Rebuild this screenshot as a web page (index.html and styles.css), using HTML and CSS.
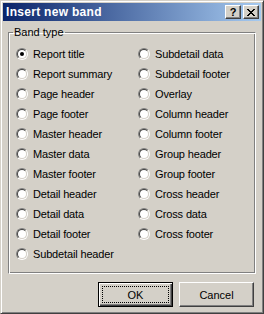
FILE: index.html
```html
<!DOCTYPE html>
<html>
<head>
<meta charset="utf-8">
<link rel="stylesheet" href="styles.css">
</head>
<body>
<div class="window">
  <div class="titlebar">
    <span class="title">Insert new band</span>
    <div class="caption-buttons">
      <button class="cap-btn"><span class="q">?</span></button>
      <button class="cap-btn"><svg width="8" height="7" viewBox="0 0 8 7"><path d="M0 0h2v1h1v1h2v-1h1v-1h2v1h-1v1h-1v1h-1v1h1v1h1v1h1v1h-2v-1h-1v-1h-2v1h-1v1h-2v-1h1v-1h1v-1h1v-1h-1v-1h-1v-1h-1z" fill="#000"/></svg></button>
    </div>
  </div>
  <div class="client">
    <fieldset class="group">
      <legend>Band type</legend>
      <div class="cols">
        <div class="col">
          <label class="radio"><span class="dot checked"></span>Report title</label>
          <label class="radio"><span class="dot"></span>Report summary</label>
          <label class="radio"><span class="dot"></span>Page header</label>
          <label class="radio"><span class="dot"></span>Page footer</label>
          <label class="radio"><span class="dot"></span>Master header</label>
          <label class="radio"><span class="dot"></span>Master data</label>
          <label class="radio"><span class="dot"></span>Master footer</label>
          <label class="radio"><span class="dot"></span>Detail header</label>
          <label class="radio"><span class="dot"></span>Detail data</label>
          <label class="radio"><span class="dot"></span>Detail footer</label>
          <label class="radio"><span class="dot"></span>Subdetail header</label>
        </div>
        <div class="col">
          <label class="radio"><span class="dot"></span>Subdetail data</label>
          <label class="radio"><span class="dot"></span>Subdetail footer</label>
          <label class="radio"><span class="dot"></span>Overlay</label>
          <label class="radio"><span class="dot"></span>Column header</label>
          <label class="radio"><span class="dot"></span>Column footer</label>
          <label class="radio"><span class="dot"></span>Group header</label>
          <label class="radio"><span class="dot"></span>Group footer</label>
          <label class="radio"><span class="dot"></span>Cross header</label>
          <label class="radio"><span class="dot"></span>Cross data</label>
          <label class="radio"><span class="dot"></span>Cross footer</label>
        </div>
      </div>
    </fieldset>
    <div class="buttons">
      <button class="btn default"><span class="focus">OK</span></button>
      <button class="btn">Cancel</button>
    </div>
  </div>
</div>
</body>
</html>
```
FILE: styles.css
```css
* { box-sizing: border-box; }
html, body { margin: 0; padding: 0; background: #d4d0c8; }
body { font-family: "Liberation Sans", Arial, sans-serif; font-size: 11px; color: #000; }

.window {
  width: 264px; height: 314px;
  background: #d4d0c8;
  border: 1px solid; border-color: #d4d0c8 #404040 #404040 #d4d0c8;
  box-shadow: inset 1px 1px 0 #fff, inset -1px -1px 0 #808080;
  padding: 2px;
  display: flex; flex-direction: column;
}
.titlebar {
  height: 18px;
  padding: 0 2px 0 2px;
  background: linear-gradient(90deg, #0a246a 0%, #a6caf0 100%);
  display: flex;
  align-items: center;
}
.title {
  flex: 1;
  color: #fff; font-weight: bold; font-size: 12px; padding-left: 1px; letter-spacing: 0.3px;
}
.caption-buttons { display: flex; gap: 2px; }
.cap-btn {
  width: 16px; height: 14px; padding: 0; margin: 0;
  background: #d4d0c8;
  border: 1px solid; border-color: #fff #404040 #404040 #fff;
  box-shadow: inset -1px -1px 0 #808080;
  display: flex; align-items: center; justify-content: center;
}
.cap-btn .q { font-weight: bold; font-size: 11px; font-family: "Liberation Sans", Arial, sans-serif; line-height: 10px; }

.client {
  flex: 1;
  padding: 5px 5px 0 5px;
  display: flex; flex-direction: column;
}
.group {
  margin: 0; padding: 5px 0 0 0;
  height: 248px;
  border: 1px solid; border-color: #808080 #fff #fff #808080;
  box-shadow: inset 1px 1px 0 #fff, -1px -1px 0 #808080 inset;
}
.group legend { padding: 0 1px; margin-left: 4px; line-height: 13px; }
.cols { display: flex; padding-left: 7px; }
.col { display: flex; flex-direction: column; }
.col:first-child { width: 122px; }
.radio { display: flex; align-items: center; height: 20px; gap: 5px; letter-spacing: -0.15px; }
.dot {
  width: 12px; height: 12px; border-radius: 50%;
  border: 1px solid; border-color: #808080 #fff #fff #808080;
  position: relative; flex: none;
}
.dot::before {
  content: ""; position: absolute; inset: 0; border-radius: 50%;
  border: 1px solid; border-color: #404040 #d4d0c8 #d4d0c8 #404040;
  background: #fff;
}
.dot.checked::after {
  content: ""; position: absolute; left: 3px; top: 3px; width: 4px; height: 4px; border-radius: 50%; background: #000;
}
.buttons { display: flex; justify-content: flex-end; gap: 6px; margin-top: 8px; padding-right: 2px; }
.btn {
  width: 75px; height: 25px; padding: 0; margin: 0;
  font-family: "Liberation Sans", Arial, sans-serif; font-size: 11px; color: #000;
  background: #d4d0c8;
  border: 1px solid; border-color: #fff #404040 #404040 #fff;
  box-shadow: inset -1px -1px 0 #808080;
}
.btn.default {
  border: 1px solid #000;
  box-shadow: inset 1px 1px 0 #fff, inset -1px -1px 0 #404040, inset -2px -2px 0 #808080;
  padding: 3px;
}
.btn .focus {
  display: flex; align-items: center; justify-content: center;
  width: 100%; height: 100%; border: 1px dotted #000;
}
```
